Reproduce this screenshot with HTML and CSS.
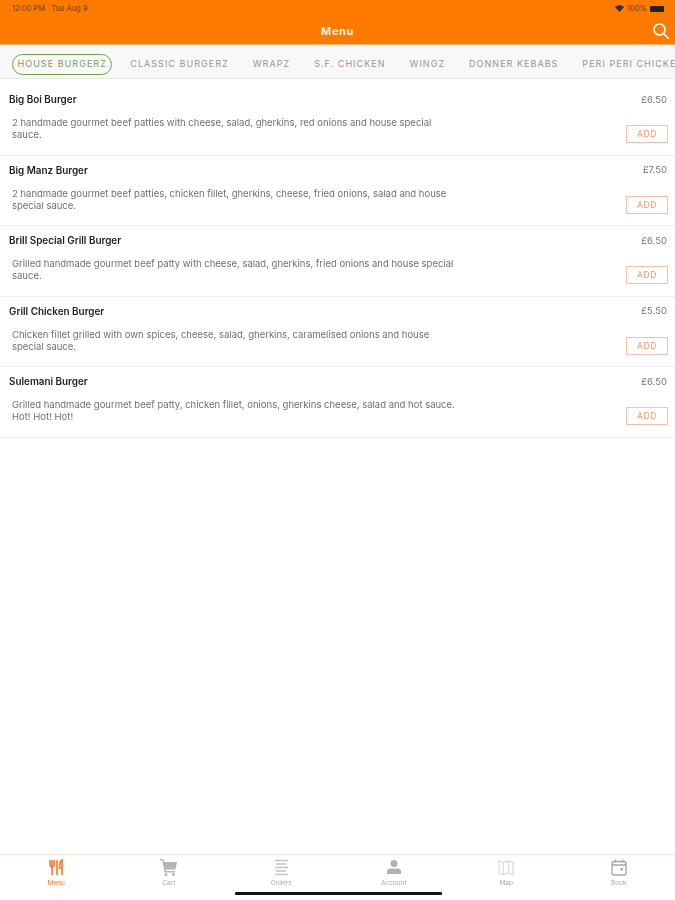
FILE: index.html
```html
<!DOCTYPE html>
<html lang="en">
<head>
  <meta charset="UTF-8" />
  <meta name="viewport" content="width=device-width, initial-scale=1" />
  <title>Menu</title>
  <link rel="stylesheet" href="styles.css">
</head>
<body>
  <div class="app">
    <header class="topbar">
      <div class="status">
        <span class="status-time">12:00 PM&nbsp;&nbsp;&nbsp;Tue Aug 9</span>
        <span class="status-right">
          <svg class="wifi" width="9" height="7" viewBox="0 0 9 7"><path d="M0 2 C2.5 -0.4 6.5 -0.4 9 2 L4.5 7 Z" fill="#333"/></svg>
          <span>100%</span>
          <span class="battery"></span>
        </span>
      </div>
      <div class="nav">
        <span class="nav-title">Menu</span>
        <svg class="search" width="16" height="16" viewBox="0 0 16 16" fill="none" stroke="#fff" stroke-width="1.6" stroke-linecap="round"><circle cx="6.500" cy="6.500" r="5.500"/><path d="M10.500 10.500l4.700 4.700"/></svg>
      </div>
    </header>

    <nav class="tabs">
      <span class="tab active">HOUSE BURGERZ</span>
      <span class="tab">CLASSIC BURGERZ</span>
      <span class="tab">WRAPZ</span>
      <span class="tab">S.F. CHICKEN</span>
      <span class="tab">WINGZ</span>
      <span class="tab">DONNER KEBABS</span>
      <span class="tab">PERI PERI CHICKEN</span>
    </nav>

    <main class="list">
      <div class="item">
        <div class="item-head"><span class="item-name">Big Boi Burger</span><span class="item-price">£6.50</span></div>
        <div class="item-body">
          <p class="item-desc">2 handmade gourmet beef patties with cheese, salad, gherkins, red onions and house special sauce.</p>
          <button class="add-btn">ADD</button>
        </div>
      </div>
      <div class="item">
        <div class="item-head"><span class="item-name">Big Manz Burger</span><span class="item-price">£7.50</span></div>
        <div class="item-body">
          <p class="item-desc">2 handmade gourmet beef patties, chicken fillet, gherkins, cheese, fried onions, salad and house special sauce.</p>
          <button class="add-btn">ADD</button>
        </div>
      </div>
      <div class="item">
        <div class="item-head"><span class="item-name">Brill Special Grill Burger</span><span class="item-price">£6.50</span></div>
        <div class="item-body">
          <p class="item-desc">Grilled handmade gourmet beef patty with cheese, salad, gherkins, fried onions and house special sauce.</p>
          <button class="add-btn">ADD</button>
        </div>
      </div>
      <div class="item">
        <div class="item-head"><span class="item-name">Grill Chicken Burger</span><span class="item-price">£5.50</span></div>
        <div class="item-body">
          <p class="item-desc">Chicken fillet grilled with own spices, cheese, salad, gherkins, caramelised onions and house special sauce.</p>
          <button class="add-btn">ADD</button>
        </div>
      </div>
      <div class="item">
        <div class="item-head"><span class="item-name">Sulemani Burger</span><span class="item-price">£6.50</span></div>
        <div class="item-body">
          <p class="item-desc">Grilled handmade gourmet beef patty, chicken fillet, onions, gherkins cheese, salad and hot sauce. Hot! Hot! Hot!</p>
          <button class="add-btn">ADD</button>
        </div>
      </div>
    </main>

    <footer class="tabbar">
      <div class="bar-item current">
        <svg width="16" height="17" viewBox="0 0 16 17" fill="none" stroke="#f47a2c" stroke-width="1.6"><path d="M2 1v5q0 2 2 2.500V16M6 1v5q0 2-2 2.500M4 1v7"/><path d="M9 1v15"/><path d="M14 16V1c-1.500 1-2.500 3-2.500 8H14"/></svg>
        <span>Menu</span>
      </div>
      <div class="bar-item">
        <svg width="18" height="17" viewBox="0 0 18 17" fill="#b5b5b5"><path d="M0 0h3l1.500 3H17l-1.500 7.500H5.500L6 12h9v1.500H4.500L2.500 1.500H0z"/><circle cx="6" cy="15.500" r="1.500"/><circle cx="13.500" cy="15.500" r="1.500"/></svg>
        <span>Cart</span>
      </div>
      <div class="bar-item">
        <svg width="15" height="17" viewBox="0 0 15 17" fill="none" stroke="#c4c4c4" stroke-width="1.700"><path d="M1 1.500h13M2 5h10M1 8.500h13M2 12h10M1 15.500h13"/></svg>
        <span>Orders</span>
      </div>
      <div class="bar-item">
        <svg width="16" height="17" viewBox="0 0 16 17" fill="#b0b0b0"><circle cx="8" cy="4.500" r="3.500"/><path d="M1 15v-2.500q0-2.500 3-3h8q3 .5 3 3V15z"/></svg>
        <span>Account</span>
      </div>
      <div class="bar-item">
        <svg width="16" height="17" viewBox="0 0 16 17" fill="none" stroke="#dcdcdc" stroke-width="1.300"><path d="M1 2l4.500 1.500L10.500 2 15 3.500v12L10.500 14l-5 1.500L1 14zM5.500 3.500v12M10.500 2v12"/></svg>
        <span>Map</span>
      </div>
      <div class="bar-item">
        <svg width="16" height="17" viewBox="0 0 16 17" fill="none" stroke="#a8a8a8" stroke-width="1.400"><rect x="1" y="2.500" width="14" height="13.500" rx="2"/><path d="M1 6h14M4.500 .5v3M11.500 .5v3"/><rect x="9.500" y="9" width="2.500" height="2.500" fill="#a8a8a8" stroke="none"/></svg>
        <span>Book</span>
      </div>
      <div class="home-indicator"></div>
    </footer>
  </div>
</body>
</html>
```

FILE: styles.css
```css
:root {
  --orange: #ff7a00;
  --soft-red: #fbbfa8;
  --line: #f1f1f1;
}
* {
  box-sizing: border-box;
}
html, body {
  margin: 0;
  padding: 0;
  height: 100%;
}
body {
  font-family: Inter, "Open Sans", sans-serif;
  background: #fff;
  color: #333;
}
/* the reference is a soft upscaled capture */
.app {
  height: 900px;
  display: flex;
  flex-direction: column;
  overflow: hidden;
  filter: blur(0.5px);
}
.topbar {
  background: var(--orange);
  height: 45px;
  flex-shrink: 0;
  border-bottom: 1px solid #ffb27a;
}
.status {
  height: 17px;
  padding: 0 11px 0 12px;
  display: flex;
  justify-content: space-between;
  align-items: center;
  font-size: 7.5px;
  color: #6b4210;
}
.status-right {
  display: flex;
  align-items: center;
  gap: 3px;
}
.battery {
  width: 14px;
  height: 6px;
  background: #222;
  border-radius: 1px;
}
.nav {
  height: 27px;
  position: relative;
  display: flex;
  justify-content: center;
  align-items: center;
}
.nav-title {
  color: #fff;
  font-size: 11px;
  font-weight: 600;
  letter-spacing: 0.7px;
}
.search {
  position: absolute;
  right: 6px;
  top: 6px;
}
.tabs {
  height: 34px;
  flex-shrink: 0;
  background: #f8f8f8;
  border-bottom: 1px solid #e8e8e8;
  padding: 5px 0 0 12px;
  display: flex;
  align-items: center;
  gap: 12px;
  overflow: hidden;
  white-space: nowrap;
}
.tab {
  padding: 0 6px;
  height: 21px;
  line-height: 20px;
  font-size: 9px;
  letter-spacing: 1.03px;
  color: #969696;
  flex-shrink: 0;
}
.tab.active {
  border: 1.5px solid #6fa53a;
  border-radius: 11px;
  line-height: 18px;
  padding: 0 4.5px;
  color: #7d9a68;
}
.list {
  flex: 1;
  padding-top: 6px;
}
.item {
  height: 70.5px;
  padding: 8px 7px 0 9px;
  border-bottom: 1.5px solid var(--line);
}
.item-head {
  display: flex;
  justify-content: space-between;
  align-items: center;
  height: 12px;
}
.item-name {
  font-size: 9.9px;
  font-weight: 600;
  color: #222;
}
.item-price {
  font-size: 9.5px;
  padding-right: 1px;
  color: #777;
}
.item-body {
  display: flex;
  justify-content: space-between;
  align-items: flex-start;
  padding-left: 3px;
  margin-top: 12px;
}
.item-desc {
  margin: 0;
  width: 448px;
  font-size: 9.5px;
  line-height: 12px;
  color: #707070;
}
.add-btn {
  width: 42px;
  height: 18px;
  margin-top: 8px;
  padding: 0;
  border: 1px solid var(--soft-red);
  background: #fff;
  color: #f8966b;
  font-family: inherit;
  font-size: 8.5px;
  letter-spacing: 0.6px;
}
.tabbar {
  height: 46px;
  flex-shrink: 0;
  border-top: 1.5px solid #fde3dc;
  display: grid;
  grid-template-columns: repeat(6, 1fr);
  position: relative;
}
.bar-item {
  display: flex;
  flex-direction: column;
  align-items: center;
  padding-top: 4px;
  gap: 3px;
  font-size: 6.5px;
  color: #ababab;
}
.bar-item.current {
  color: #f47a2c;
}
.home-indicator {
  position: absolute;
  left: 235px;
  bottom: 5px;
  width: 207px;
  height: 3px;
  border-radius: 1px;
  background: #111;
}
```
